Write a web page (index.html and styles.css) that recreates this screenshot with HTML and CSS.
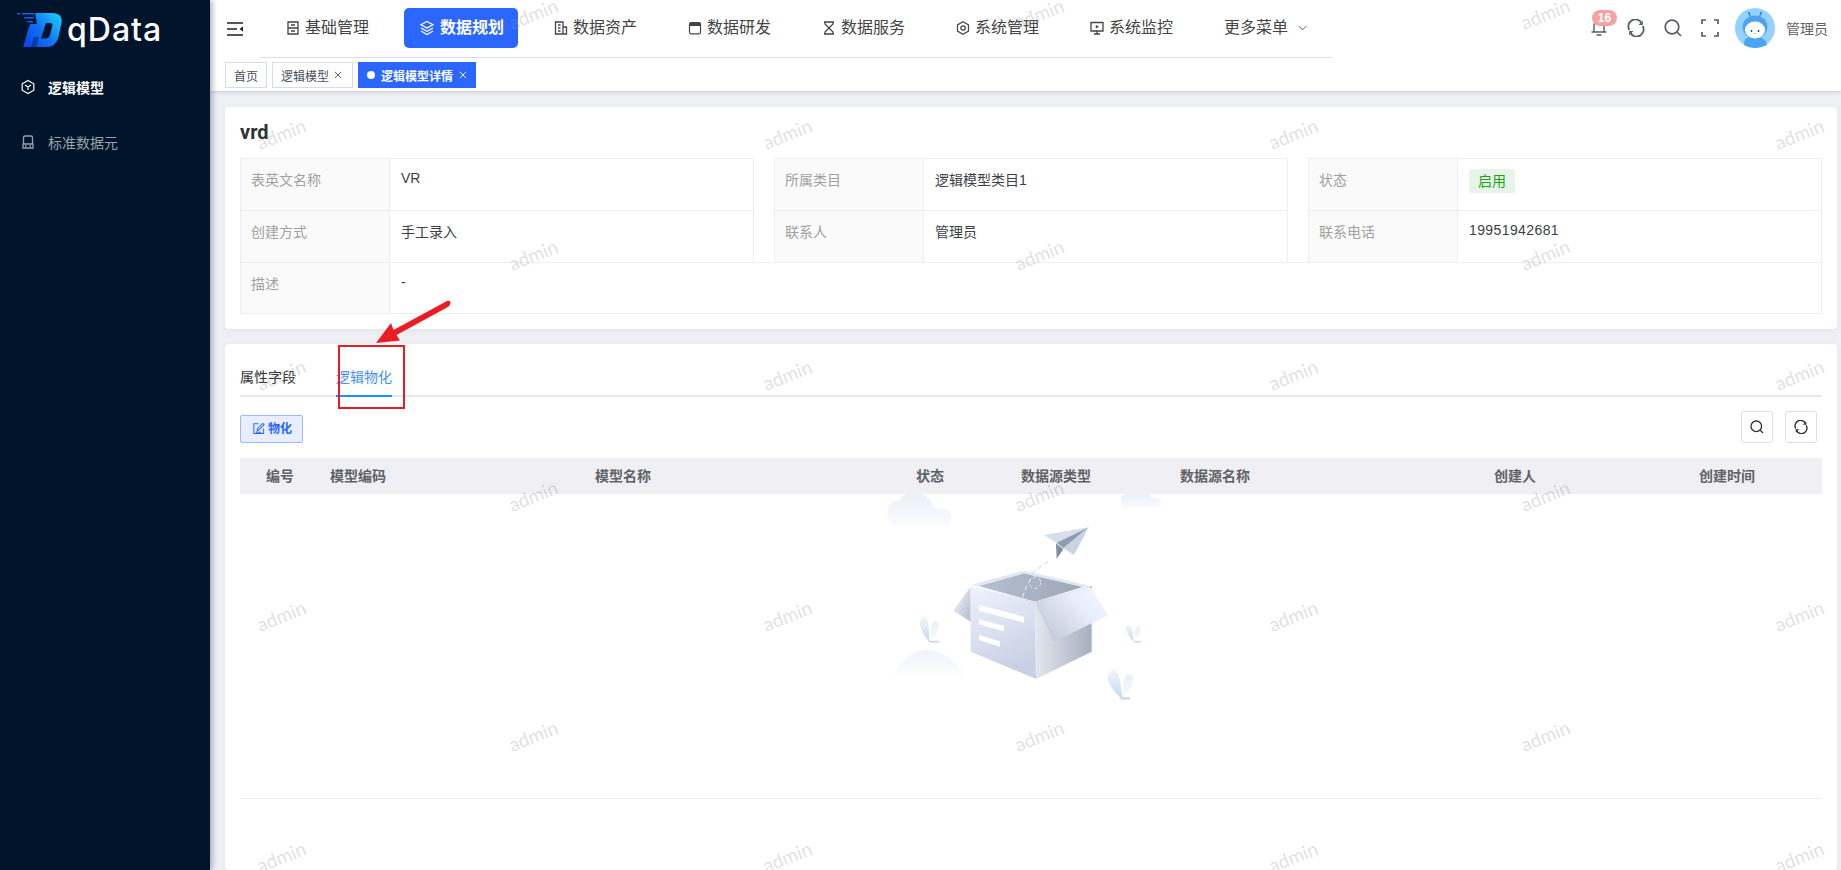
FILE: index.html
```html
<!DOCTYPE html>
<html lang="zh-CN">
<head>
<meta charset="utf-8">
<title>qData</title>
<link rel="stylesheet" href="styles.css">
</head>
<body>
<div class="app">
  <aside class="sidebar">
    <div class="brand">
      <svg class="brand-mark" viewBox="15 11 50 38">
        <defs><linearGradient id="lg" x1="0" y1="1" x2="1" y2="0.3"><stop offset="0" stop-color="#0b3fe6"/><stop offset=".55" stop-color="#0f72f5"/><stop offset="1" stop-color="#18c0ff"/></linearGradient></defs>
        <path fill="#1060f0" d="M17 13h3v1.500h-3zM22 13h12v1.500H22zM24 17h10v1.500H24zM27 21h6v1.500h-6z"/>
        <path fill="url(#lg)" d="M35 13H52Q63 13 61.500 23L58.500 37Q56 47 46 47H23L30 24H37Z"/>
        <path fill="#00152b" d="M46 23H50Q53 23 52.300 26L50 35Q49 38.500 45 38.500H41Z"/>
        <path fill="#00152b" opacity=".4" d="M34 37H39L36.500 47H31Z"/>
      </svg>
      <span class="brand-name">qData</span>
    </div>
    <a class="side-item is-on">
      <svg class="ico side-ico" viewBox="0 0 16 16"><path d="M8 1.500 13.800 4.800V11.200L8 14.500 2.200 11.200V4.800Z"/><path d="M5 6 8 8 11 6M8 8V11"/></svg>
      <span>逻辑模型</span>
    </a>
    <a class="side-item">
      <svg class="ico side-ico" viewBox="0 0 16 16"><path d="M3.500 10V3.500Q3.500 2 5 2H11Q12.500 2 12.500 3.500V10M3 10H13V14H3ZM5 12H6.500M9.500 12H11" stroke-width="1.300"/></svg>
      <span>标准数据元</span>
    </a>
  </aside>

  <div class="workspace">
    <header class="topbar">
      <svg class="ico toggle" viewBox="0 0 16 14"><path d="M0 1H16M0 7H10M0 13H16" stroke-width="1.600"/><path class="solid" d="M16 4.500V9.500L12.500 7Z"/></svg>
      <nav class="menu">
        <a class="menu-item"><svg class="ico" viewBox="0 0 14 14"><path d="M2 1H12V13H2ZM2 7H12M5 4H9M5 10H9" stroke-width="1.300"/></svg><span>基础管理</span></a>
        <a class="menu-item is-on"><svg class="ico" viewBox="0 0 16 16"><path d="M8 1.500 14 4.800 8 8 2 4.800ZM2 8 8 11.200 14 8M2 11 8 14.500 14 11" stroke-width="1.300"/></svg><span>数据规划</span></a>
        <a class="menu-item"><svg class="ico" viewBox="0 0 14 14"><path d="M1.500 1H9V13H1.500ZM9 6H12.500V13H9ZM4 4H6.500M4 7H6.500M4 10H6.500" stroke-width="1.300"/></svg><span>数据资产</span></a>
        <a class="menu-item"><svg class="ico" viewBox="0 0 14 14"><path d="M1.500 3Q1.500 1.500 3 1.500H11Q12.500 1.500 12.500 3V11Q12.500 12.800 11 12.800H3Q1.500 12.800 1.500 11Z" stroke-width="1.200"/><path class="solid" d="M1.500 3Q1.500 1.500 3 1.500H11Q12.500 1.500 12.500 3V5H1.500Z"/></svg><span>数据研发</span></a>
        <a class="menu-item"><svg class="ico" viewBox="0 0 14 14"><path d="M2 1H12M2 13H12M3 1V3L11 11V13M11 1V3L3 11V13" stroke-width="1.300"/></svg><span>数据服务</span></a>
        <a class="menu-item"><svg class="ico" viewBox="0 0 14 14"><path d="M7 .800 12.500 3.900V10.100L7 13.200 1.500 10.100V3.900Z" stroke-width="1.200"/><circle cx="7" cy="7" r="2.200" stroke-width="1.300"/></svg><span>系统管理</span></a>
        <a class="menu-item"><svg class="ico" viewBox="0 0 14 14"><path d="M1 1.500H13V10H1ZM7 10V13M4 13H10" stroke-width="1.300"/><path class="solid" d="M5.800 4 9 5.800 5.800 7.500Z"/></svg><span>系统监控</span></a>
        <a class="menu-item menu-more"><span>更多菜单</span><svg class="ico chev" viewBox="0 0 10 6"><path d="M1 1 5 5 9 1"/></svg></a>
      </nav>
      <div class="tools">
        <span class="bell">
          <svg class="ico" viewBox="0 0 18 18"><path d="M4 13V6.500Q4 2 9 2T14 6.500V13M1.500 13H16.500M6.500 16H11.500" stroke-width="1.400"/></svg>
          <span class="badge">16</span>
        </span>
        <svg class="ico" viewBox="0 0 18 18"><path d="M2.300 11A7 7 0 0 1 14.500 4M15.700 7A7 7 0 0 1 3.500 14" stroke-width="1.800"/><path class="solid" d="M15.800 1.500V6H11.500ZM2.200 16.500V12H6.500Z"/></svg>
        <svg class="ico" viewBox="0 0 18 18"><circle cx="8" cy="8" r="6.800" stroke-width="1.700"/><path d="M13 13 17 17" stroke-width="1.700"/></svg>
        <svg class="ico" viewBox="0 0 18 18"><path d="M1 5V1H5M13 1H17V5M17 13V17H13M5 17H1V13" stroke-width="1.700"/></svg>
        <svg class="avatar" viewBox="0 0 40 40">
          <circle cx="20" cy="20" r="20" fill="#93d2ff"/>
          <path d="M9 37Q9 30 14 29L27 30Q31 32 32 37 26 40 20 40 14 40 9 37Z" fill="#4aa4f2"/>
          <path d="M14 5 16 10M26 5 24 10" stroke="#2f7fd6" stroke-width="1.200" fill="none"/>
          <circle cx="14" cy="5" r="1.100" fill="#2f7fd6"/><circle cx="26" cy="5" r="1.100" fill="#2f7fd6"/>
          <ellipse cx="20" cy="19" rx="12.500" ry="11.500" fill="#4fa3ef"/>
          <ellipse cx="20" cy="22" rx="10" ry="8.500" fill="#fff"/>
          <circle cx="16.500" cy="23" r=".9" fill="#1d3f6e"/><circle cx="23.500" cy="23" r=".9" fill="#1d3f6e"/>
          <path d="M19.500 25.500Q20 26.500 20.500 25.500" stroke="#1d3f6e" stroke-width=".7" fill="none"/>
        </svg>
        <span class="user">管理员</span>
      </div>
    </header>

    <div class="tagbar">
      <a class="tag">首页</a>
      <a class="tag tag-close">逻辑模型<svg class="ico tag-x" viewBox="0 0 8 8"><path d="M.800 .800 7.200 7.200M7.200 .800 .800 7.200"/></svg></a>
      <a class="tag is-on"><i class="dot"></i>逻辑模型详情<svg class="ico tag-x" viewBox="0 0 8 8"><path d="M.800 .800 7.200 7.200M7.200 .800 .800 7.200"/></svg></a>
    </div>

    <main class="page">
      <section class="card card-info">
        <h2 class="title">vrd</h2>
        <div class="desc">
          <div class="lbl">表英文名称</div><div class="val val-latin">VR</div><div class="sp"></div>
          <div class="lbl">所属类目</div><div class="val">逻辑模型类目1</div><div class="sp"></div>
          <div class="lbl">状态</div><div class="val val-tag"><span class="status">启用</span></div>

          <div class="lbl">创建方式</div><div class="val">手工录入</div><div class="sp"></div>
          <div class="lbl">联系人</div><div class="val">管理员</div><div class="sp"></div>
          <div class="lbl">联系电话</div><div class="val val-latin phone">19951942681</div>

          <div class="lbl lbl-last">描述</div><div class="val val-latin val-wide">-</div>
        </div>
      </section>

      <section class="card card-list">
        <div class="tabs">
          <a class="tab">属性字段</a>
          <a class="tab is-on">逻辑物化</a>
        </div>
        <div class="toolbar">
          <button class="btn-main"><svg class="ico" viewBox="0 0 14 14"><path d="M7 2H2V12.500H12.500V7M5.500 9.500 6 7 11.500 1.500 13 3 7.500 8.500ZM4 11H10" stroke-width="1.100"/></svg><span>物化</span></button>
          <div class="tool-btns">
            <button class="btn-sq"><svg class="ico" viewBox="0 0 14 14"><circle cx="6.300" cy="6.300" r="5.300" stroke-width="1.300"/><path d="M10 10 13 13" stroke-width="1.300"/></svg></button>
            <button class="btn-sq"><svg class="ico" viewBox="0 0 18 18"><path d="M2.300 11A7 7 0 0 1 14.500 4M15.700 7A7 7 0 0 1 3.500 14" stroke-width="1.800"/><path class="solid" d="M15.800 1.500V6H11.500ZM2.200 16.500V12H6.500Z"/></svg></button>
          </div>
        </div>
        <div class="thead">
          <span>编号</span><span>模型编码</span><span>模型名称</span><span>状态</span><span>数据源类型</span><span>数据源名称</span><span class="col-user">创建人</span><span>创建时间</span>
        </div>
        <div class="tbody">
          <svg class="empty" viewBox="0 42 1086 650">
            <defs>
              <linearGradient id="soft" x1="0" y1="0" x2="0" y2="1"><stop offset="0" stop-color="#e9eff9"/><stop offset="1" stop-color="#fafbfe"/></linearGradient>
              <linearGradient id="hill" x1="0" y1="0" x2="0" y2="1"><stop offset="0" stop-color="#eff3fb"/><stop offset="1" stop-color="#fff"/></linearGradient>
              <linearGradient id="front" x1="0" y1="0" x2="0.300" y2="1"><stop offset="0" stop-color="#eef3fd"/><stop offset="1" stop-color="#c8d1e3"/></linearGradient>
              <linearGradient id="side" x1="0" y1="0" x2="1" y2="0"><stop offset="0" stop-color="#e4e7ee"/><stop offset="1" stop-color="#a5afc0"/></linearGradient>
              <linearGradient id="flap" x1="0" y1="1" x2="1" y2="0.300"><stop offset="0" stop-color="#b7bfcf"/><stop offset=".7" stop-color="#e7edfa"/><stop offset="1" stop-color="#f0f5ff"/></linearGradient>
              <linearGradient id="flapl" x1="1" y1="1" x2="0" y2="0.200"><stop offset="0" stop-color="#b5bccb"/><stop offset="1" stop-color="#eef2fb"/></linearGradient>
              <linearGradient id="inner" x1="0" y1="0" x2="1" y2="0"><stop offset="0" stop-color="#b7c0d0"/><stop offset="1" stop-color="#9ea7b8"/></linearGradient>
              <linearGradient id="leaf" x1="0" y1="0" x2="0" y2="1"><stop offset="0" stop-color="#f4f7fc"/><stop offset="1" stop-color="#c7d6ea"/></linearGradient>
            </defs>
            <path fill="url(#soft)" d="M112 100Q112 62 150 62Q165 30 200 40Q245 45 252 86H280Q306 88 306 112Q306 135 280 135H145Q112 135 112 100Z"/>
            <path fill="url(#soft)" d="M812 62Q812 42 830 42H900V54H915Q934 56 934 70Q934 84 915 84H835Q812 84 812 62Z"/>
            <path fill="url(#hill)" d="M118 598Q170 510 230 510Q300 512 356 598Z"/>
            <path fill="url(#leaf)" d="M238 486Q210 455 209 425Q214 405 228 412Q237 420 238 486Z"/>
            <path fill="url(#soft)" d="M238 486Q240 430 254 422Q268 422 267 440Q262 470 238 486Z"/>
            <path fill="#cfdcec" d="M232 482H268V488H240Z"/>
            <path fill="url(#leaf)" d="M851 486Q828 460 827 442Q830 430 840 436Q848 445 851 486Z"/>
            <path fill="url(#soft)" d="M851 486Q851 450 862 440Q872 438 872 450Q866 470 851 486Z"/>
            <path fill="#cfdcec" d="M848 482H872V488H854Z"/>
            <path fill="url(#leaf)" d="M816 656Q774 620 773 590Q778 565 798 570Q812 585 816 656Z"/>
            <path fill="url(#soft)" d="M816 656Q816 600 830 584Q850 578 849 600Q844 630 816 656Z"/>
            <path fill="#cfdcec" d="M806 651H840V659H815Z"/>
            <path fill="url(#inner)" d="M385 318 522 280 700 320 555 365Z"/>
            <path fill="#dfe6f5" d="M362 315 522 272 722 318 700 322 522 280 385 318Z"/>
            <path fill="url(#flapl)" d="M362 320 310 392 362 425Z"/>
            <path fill="url(#front)" d="M362 318 555 365 558 597 362 515Z"/>
            <path fill="url(#side)" d="M555 365 725 318V515L558 597Z"/>
            <path fill="url(#flap)" d="M555 365 720 320 776 405 612 485Z"/>
            <path fill="#fff" d="M387 375 522 410V428L387 392ZM387 418 462 437V454L387 433ZM387 465 450 484V500L387 480Z"/>
            <path fill="none" stroke="#e9edf5" stroke-width="3" stroke-dasharray="14 9" d="M518 352Q530 310 546 294"/>
            <circle cx="555" cy="308" r="17" fill="none" stroke="#e9edf5" stroke-width="3" stroke-dasharray="10 8"/>
            <path fill="none" stroke="#cdd4e2" stroke-width="3" stroke-dasharray="14 9" d="M546 280 602 238"/>
            <path fill="#d5deeb" d="M582 165 716 142 620 188Z"/>
            <path fill="#8f9db3" d="M620 188 716 142 640 205Z"/>
            <path fill="#c9d3e2" d="M640 205 716 142 672 225Z"/>
            <path fill="#7f8da4" d="M618 190 640 208 620 236Z"/>
          </svg>
        </div>
      </section>
    </main>
  </div>

  <div class="watermark">
    <div class="wm-row wm-a"><span>admin</span><span>admin</span><span>admin</span></div>
    <div class="wm-row wm-b"><span>admin</span><span>admin</span><span>admin</span><span>admin</span></div>
    <div class="wm-row wm-a"><span>admin</span><span>admin</span><span>admin</span></div>
    <div class="wm-row wm-b"><span>admin</span><span>admin</span><span>admin</span><span>admin</span></div>
    <div class="wm-row wm-a"><span>admin</span><span>admin</span><span>admin</span></div>
    <div class="wm-row wm-b"><span>admin</span><span>admin</span><span>admin</span><span>admin</span></div>
    <div class="wm-row wm-a"><span>admin</span><span>admin</span><span>admin</span></div>
    <div class="wm-row wm-b"><span>admin</span><span>admin</span><span>admin</span><span>admin</span></div>
  </div>

  <svg class="annotation" viewBox="0 0 1841 870">
    <rect x="339" y="346" width="65" height="62" fill="none" stroke="#e81c24" stroke-width="2"/>
    <path fill="#ed1c24" d="M376 343 391 323 393.500 330 447 301Q451 300 450.500 303.500 450 306 447 307.500L396.500 335 400 340.500Z"/>
  </svg>
</div>
</body>
</html>
```

FILE: styles.css
```css
* { box-sizing: border-box; }
html, body { margin: 0; padding: 0; }
body {
  font-family: "Liberation Sans", "Noto Sans CJK SC", sans-serif;
  font-size: 14px;
  color: #303133;
  background: #eff0f4;
}
a { color: inherit; text-decoration: none; }
button { font: inherit; cursor: pointer; padding: 0; }

.app { position: relative; display: flex; width: 1841px; height: 870px; overflow: hidden; }

.ico { display: block; flex: none; fill: none; stroke: currentColor; stroke-width: 1.2; }
.ico .solid { fill: currentColor; stroke: none; }

/* sidebar */
.sidebar {
  position: relative;
  z-index: 3;
  flex: none;
  width: 210px;
  background: #00152b;
  box-shadow: 2px 0 6px rgba(0, 21, 41, .35);
  color: #9aa3ad;
}
.brand { display: flex; align-items: center; height: 60px; padding-left: 15px; }
.brand-mark { display: block; width: 50px; height: 38px; }
.brand-name {
  margin-left: 2px;
  font-family: "Inter", sans-serif;
  font-size: 32px;
  font-weight: 500;
  line-height: 40px;
  letter-spacing: 1px;
  color: #fff;
}
.side-item { display: flex; align-items: center; height: 55px; padding-left: 20px; font-size: 14px; }
.side-item.is-on { margin-top: -1px; color: #fff; font-weight: 700; }
.side-ico { width: 16px; height: 16px; margin-right: 12px; stroke-width: 1.2; }

/* right side */
.workspace { flex: 1; min-width: 0; display: flex; flex-direction: column; }

.topbar { display: flex; height: 58px; padding-left: 17px; background: #fff; position: relative; z-index: 2; }
.toggle { width: 16px; height: 14px; margin-top: 22px; color: #1f1f1f; }
.menu { display: flex; gap: 20px; height: 58px; margin-left: 17px; padding: 8px 10px 0; border-bottom: 1px solid #dcdfe6; color: #444; }
.menu-item { display: flex; align-items: center; width: 114px; height: 40px; padding-left: 16px; gap: 5px; border-radius: 5px; font-size: 16px; line-height: 22px; }
.menu-item .ico { width: 14px; height: 14px; }
.menu-item.is-on { background: #2a66ff; color: #fff; font-weight: 700; }
.menu-item.is-on .ico { width: 16px; height: 16px; margin-left: -1px; }
.menu-more { gap: 10px; }
.menu-more .chev { width: 9px; height: 6px; stroke-width: 1; }

.tools { display: flex; align-items: center; gap: 19px; margin-left: auto; padding: 0 13px 3px 0; color: #5a5e66; }
.tools > .ico, .bell .ico { width: 18px; height: 18px; }
.bell { position: relative; display: block; }
.badge {
  position: absolute;
  top: -9px;
  left: 2px;
  width: 25px;
  height: 16px;
  border-radius: 8px;
  background: #f3a3a3;
  color: #fff;
  font-size: 12px;
  font-weight: 700;
  line-height: 16px;
  text-align: center;
}
.avatar { display: block; width: 40px; height: 40px; margin-left: -3px; flex: none; }
.user { margin-left: -8px; color: #606266; font-size: 14px; }

.tagbar {
  position: relative;
  z-index: 1;
  display: flex;
  gap: 5px;
  height: 33px;
  padding: 4px 0 0 15px;
  background: #fff;
  box-shadow: 0 1px 4px rgba(0, 21, 41, .18);
}
.tag { display: flex; align-items: center; height: 26px; padding: 0 8px; border: 1px solid #d8dce5; background: #fff; font-size: 12px; color: #495060; }
.tag-close { padding-right: 10px; }
.tag.is-on { background: #2a66ff; border-color: #2a66ff; color: #fff; font-weight: 700; }
.dot { width: 8px; height: 8px; margin-right: 6px; border-radius: 50%; background: #fff; }
.tag-x { width: 8px; height: 8px; margin-left: 5px; stroke-width: .9; }
.is-on .tag-x { margin-left: 6px; }

.page { flex: 1; display: flex; flex-direction: column; gap: 15px; padding: 16px 4px 0 15px; min-height: 0; }
.card { background: #fff; border-radius: 4px; padding: 0 15px; box-shadow: 0 2px 8px rgba(0, 21, 41, .05); }
.card-info { height: 222px; }
.card-list { flex: 1; }

.title { margin: 0; padding-top: 12px; height: 51px; font-family: "Roboto", sans-serif; font-size: 20px; line-height: 26px; font-weight: 700; color: #303133; }

.desc { display: grid; grid-template-columns: 150px 364px 20px 150px 364px 20px 150px 1fr; grid-auto-rows: 52px; }
.lbl, .val { border: 1px solid #ebeef5; margin-bottom: -1px; line-height: 20px; }
.lbl { padding-left: 10px; padding-top: 11px; background: #fafafa; color: #a0a0a0; }
.val { margin-left: -1px; padding-left: 11px; padding-top: 11px; color: #3c3f45; }
.val-latin { padding-top: 9px; }
.lbl-last, .val-wide { margin-bottom: 0; }
.val-wide { grid-column: 2 / -1; }
.val-tag { padding-top: 10px; }
.phone { letter-spacing: .4px; }
.status { display: inline-block; width: 46px; height: 24px; border-radius: 2px; background: #e7f4e7; color: #18a418; font-size: 14px; line-height: 24px; text-align: center; }

.tabs { display: flex; gap: 40px; height: 53px; padding-top: 15px; border-bottom: 2px solid #e4e7ed; }
.tab { height: 38px; line-height: 36px; color: #303133; margin-bottom: -2px; }
.tab.is-on { color: #3f8ff0; border-bottom: 2px solid #1890ff; }

.toolbar { display: flex; align-items: flex-end; justify-content: space-between; margin-top: 14px; height: 32px; padding-right: 5px; }
.btn-main { display: flex; align-items: center; gap: 3px; width: 63px; height: 28px; padding: 0 0 3px 11px; border: 1px solid #9db8ff; border-radius: 2px; background: #e8eeff; color: #2a66ff; font-size: 12px; font-weight: 700; }
.btn-main .ico { width: 13px; height: 13px; margin-top: 2px; }
.tool-btns { display: flex; gap: 12px; }
.btn-sq { display: flex; align-items: center; justify-content: center; width: 32px; height: 32px; border: 1px solid #dcdfe6; border-radius: 3px; background: #fff; color: #303133; }
.btn-sq .ico { width: 14px; height: 14px; }

.thead {
  display: grid;
  grid-template-columns: 80px 76px 454px 160px 92px 226px 370px 58px;
  align-items: center;
  height: 36px;
  margin-top: 15px;
  padding-bottom: 2px;
  background: #efeff4;
  color: #606266;
  font-weight: 700;
  text-align: center;
  white-space: nowrap;
}
.thead span { display: block; }
.thead .col-user { padding-left: 4px; }
.tbody { height: 305px; border-bottom: 1px solid #ebeef5; }
.empty { display: block; width: 362px; height: 216.67px; margin: 0 auto; }

/* overlays */
.watermark { position: absolute; z-index: 2; left: 210px; top: 0; right: 0; bottom: 0; overflow: hidden; pointer-events: none; }
.wm-row { display: flex; gap: 460px; height: 30px; margin-bottom: 90.4px; align-items: center; }
.wm-b { margin-left: 46px; }
.wm-a { margin-left: 298px; }
.wm-row span {
  flex: none;
  width: 46px;
  text-align: center;
  font-family: "Lato", sans-serif;
  font-size: 19px;
  line-height: 12px;
  color: rgba(150, 150, 150, .3);
  transform: rotate(-22deg);
}
.annotation { position: absolute; z-index: 4; left: 0; top: 0; width: 1841px; height: 870px; pointer-events: none; }
```
